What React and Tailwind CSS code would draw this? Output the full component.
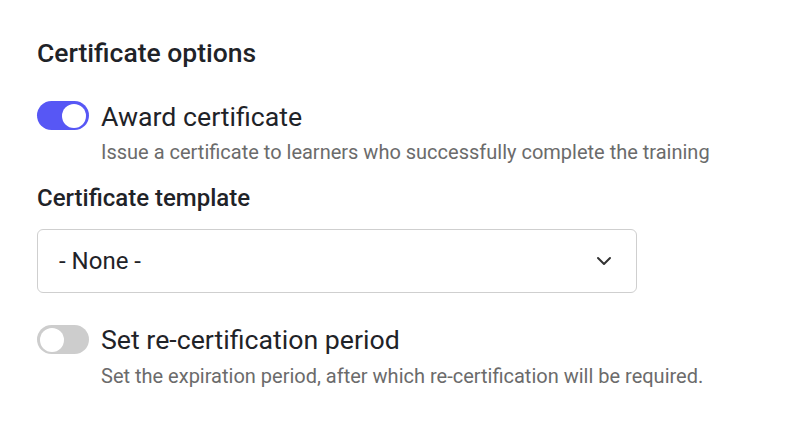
export default function App() {
  return (
    <div className="w-[792px] h-[448px] bg-white px-[37px] pt-[36px] font-['Roboto',sans-serif] text-[#1f2328]">
      <h2 className="text-[26.5px] leading-[34px] font-medium">Certificate options</h2>

      <div className="mt-[30px] flex items-start gap-[12px]">
        <button className="mt-[1px] w-[52px] h-[29px] rounded-full bg-[#5757f5] flex items-center justify-end px-[3px] shrink-0">
          <span className="w-[24px] h-[24px] rounded-full bg-white" />
        </button>
        <div>
          <div className="text-[26.7px] leading-[34px]">Award certificate</div>
          <div className="mt-[5px] text-[20px] leading-[26px] text-[#6b6b6b]">Issue a certificate to learners who successfully complete the training</div>
        </div>
      </div>

      <div className="mt-[18px] text-[24px] leading-[30px] font-medium">Certificate template</div>

      <div className="mt-[16px] w-[600px] h-[64px] border border-[#cfcfcf] rounded-[6px] flex items-center justify-between pl-[21px] pr-[24px]">
        <span className="text-[24px] text-[#1f2328]">- None -</span>
        <svg width="16" height="10" viewBox="0 0 16 10" fill="none" stroke="#333" strokeWidth="2" strokeLinecap="round" strokeLinejoin="round">
          <path d="M2 2l6 6 6-6" />
        </svg>
      </div>

      <div className="mt-[30px] flex items-start gap-[12px]">
        <button className="mt-[2px] w-[52px] h-[29px] rounded-full bg-[#cdcdcd] flex items-center justify-start px-[3px] shrink-0">
          <span className="w-[24px] h-[24px] rounded-full bg-white" />
        </button>
        <div>
          <div className="text-[26.7px] leading-[34px]">Set re-certification period</div>
          <div className="mt-[6px] text-[20px] leading-[26px] text-[#6b6b6b]">Set the expiration period, after which re-certification will be required.</div>
        </div>
      </div>
    </div>
  );
}
